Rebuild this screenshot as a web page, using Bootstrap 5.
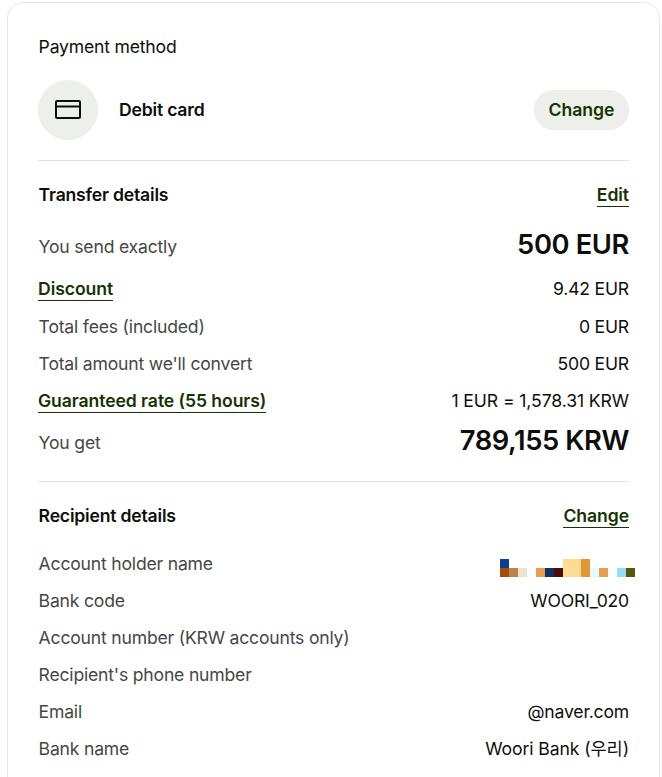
<!DOCTYPE html>
<html lang="en">
<head>
  <meta charset="UTF-8" />
  <meta name="viewport" content="width=device-width, initial-scale=1" />
  <title>Payment review</title>
  <link href="https://cdn.jsdelivr.net/npm/bootstrap@5.3.0/dist/css/bootstrap.min.css" rel="stylesheet" />
  <style>
    html, body {
      height: 777px;
      overflow: hidden;
    }

    body {
      background-color: #fff;
      font-family: "Inter", "Noto Sans CJK KR", sans-serif;
      font-size: 17.6px;
      line-height: 24px;
      color: #0e0f0c;
      letter-spacing: -0.2px;
    }

    .review-box {
      margin: 2px 2px 0 7px;
      padding: 32px 30px 0 30px;
      border: 1px solid #e6e7e5;
      border-radius: 16px;
      height: 800px;
    }

    .pay-title {
      margin-bottom: 21px;
      margin-left: 0.6px;
    }

    .pay-icon {
      width: 60px;
      height: 60px;
      margin-right: 21px;
      background-color: #edefeb;
    }

    .strong-text {
      font-weight: 600;
    }

    .section-head .strong-text,
    .muted-label {
      margin-left: 0.6px;
    }

    .change-btn {
      padding: 8px 14.5px;
      border: 0;
      border-radius: 20px;
      background-color: #edefeb;
      color: #163300;
      font-weight: 600;
      line-height: 24px;
    }

    .sep {
      height: 1px;
      margin-top: 20px;
      background-color: #e2e3e1;
    }

    .sep.after-rows {
      margin-top: 19px;
    }

    .section-head {
      display: flex;
      justify-content: space-between;
      align-items: center;
      height: 24px;
      margin-top: 22px;
      margin-bottom: 17px;
    }

    .under-link {
      color: #163300;
      font-weight: 600;
      text-decoration: none;
      border-bottom: 1px solid #163300;
      display: inline-block;
      line-height: 23px;
      letter-spacing: -0.08px;
    }

    .info-row {
      display: flex;
      justify-content: space-between;
      align-items: center;
      height: 37px;
    }

    .info-row.first-big {
      height: 46px;
    }

    .info-row.with-link {
      height: 38px;
    }

    .info-row.last-big {
      height: 42px;
    }

    .muted-label {
      color: #454745;
    }

    .big-num {
      font-size: 27.35px;
      font-weight: 600;
      letter-spacing: -0.4px;
    }

    .first-big .big-num {
      margin-bottom: 4px;
    }

    .last-big .muted-label {
      margin-top: 4px;
    }

    .wide-val {
      letter-spacing: -0.1px;
    }

    .mosaic {
      display: block;
      margin-top: 8px;
      margin-right: -6px;
    }
  </style>
</head>
<body>
  <div class="review-box">
    <div class="pay-title">Payment method</div>

    <div class="d-flex align-items-center">
      <div class="pay-icon rounded-circle d-flex align-items-center justify-content-center flex-shrink-0">
        <svg width="26" height="20" viewBox="0 0 26 20" fill="none" stroke="#0e0f0c" stroke-width="2">
          <rect x="1" y="1" width="24" height="17" rx="1"></rect>
          <path d="M1 6.5h24"></path>
        </svg>
      </div>
      <div class="strong-text flex-grow-1">Debit card</div>
      <button class="change-btn" type="button">Change</button>
    </div>
    <div class="sep"></div>

    <div class="section-head">
      <div class="strong-text">Transfer details</div>
      <a class="under-link" href="#">Edit</a>
    </div>

    <div class="info-row first-big">
      <span class="muted-label">You send exactly</span>
      <span class="big-num">500 EUR</span>
    </div>
    <div class="info-row with-link">
      <a class="under-link" href="#">Discount</a>
      <span>9.42 EUR</span>
    </div>
    <div class="info-row">
      <span class="muted-label">Total fees (included)</span>
      <span>0 EUR</span>
    </div>
    <div class="info-row">
      <span class="muted-label">Total amount we'll convert</span>
      <span>500 EUR</span>
    </div>
    <div class="info-row with-link">
      <a class="under-link" href="#">Guaranteed rate (55 hours)</a>
      <span class="wide-val">1 EUR = 1,578.31 KRW</span>
    </div>
    <div class="info-row last-big">
      <span class="muted-label">You get</span>
      <span class="big-num">789,155 KRW</span>
    </div>
    <div class="sep after-rows"></div>

    <div class="section-head">
      <div class="strong-text">Recipient details</div>
      <a class="under-link" href="#">Change</a>
    </div>

    <div class="info-row">
      <span class="muted-label">Account holder name</span>
      <svg class="mosaic" width="135" height="18" viewBox="0 0 135 18">
        <rect x="0" y="0" width="9" height="9" fill="#0b3f94"></rect>
        <rect x="0" y="9" width="9" height="9" fill="#a44c0b"></rect>
        <rect x="9" y="9" width="9" height="9" fill="#bb834a"></rect>
        <rect x="18" y="9" width="9" height="9" fill="#e8e3d3"></rect>
        <rect x="36" y="9" width="9" height="9" fill="#e89d4f"></rect>
        <rect x="45" y="9" width="9" height="9" fill="#0e3268"></rect>
        <rect x="54" y="9" width="9" height="9" fill="#4e0d0d"></rect>
        <rect x="63" y="0" width="18" height="18" fill="#fedb92"></rect>
        <rect x="81" y="0" width="9" height="18" fill="#e29636"></rect>
        <rect x="90" y="9" width="9" height="9" fill="#dffbff"></rect>
        <rect x="99" y="9" width="9" height="9" fill="#e89d4f"></rect>
        <rect x="117" y="9" width="9" height="9" fill="#94dcff"></rect>
        <rect x="126" y="9" width="9" height="9" fill="#565808"></rect>
      </svg>
    </div>
    <div class="info-row">
      <span class="muted-label">Bank code</span>
      <span>WOORI_020</span>
    </div>
    <div class="info-row">
      <span class="muted-label">Account number (KRW accounts only)</span>
    </div>
    <div class="info-row">
      <span class="muted-label">Recipient's phone number</span>
    </div>
    <div class="info-row">
      <span class="muted-label">Email</span>
      <span>@naver.com</span>
    </div>
    <div class="info-row">
      <span class="muted-label">Bank name</span>
      <span class="wide-val">Woori Bank (우리)</span>
    </div>
  </div>

  <script src="https://cdn.jsdelivr.net/npm/bootstrap@5.3.0/dist/js/bootstrap.bundle.min.js"></script>
</body>
</html>
